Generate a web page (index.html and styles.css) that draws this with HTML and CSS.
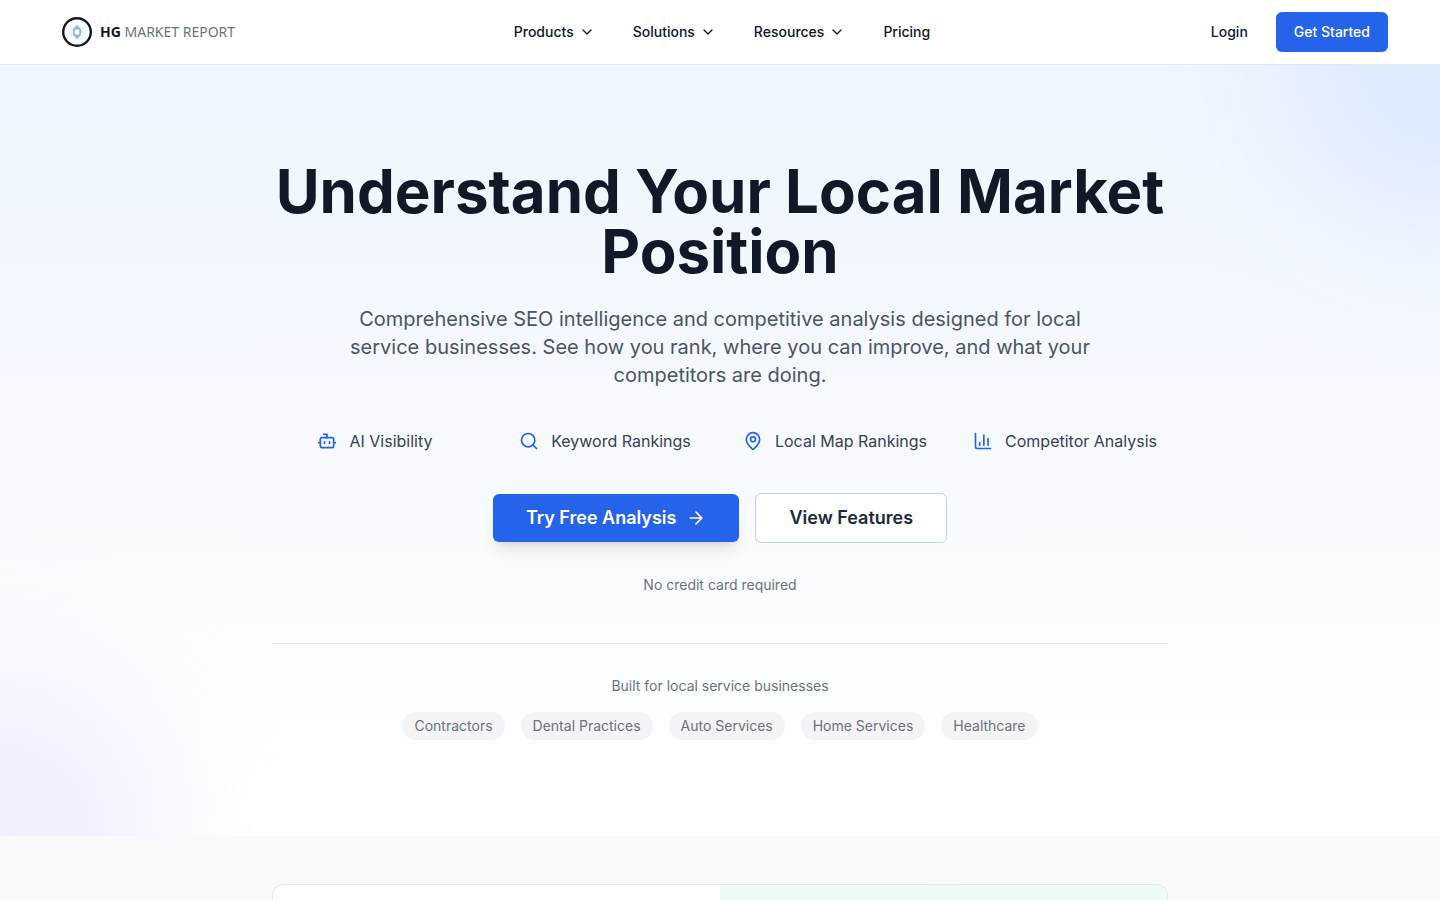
FILE: index.html
```html
<!DOCTYPE html>
<html lang="en">
<head>
<meta charset="utf-8">
<meta name="viewport" content="width=device-width, initial-scale=1">
<title>HG Market Report</title>
<link rel="stylesheet" href="styles.css">
</head>
<body>
<header class="site-header">
  <div class="header-inner">
    <a class="logo" href="#">
      <svg class="logo-mark" viewBox="0 0 30 30" aria-hidden="true">
        <circle cx="15" cy="15" r="13.8" fill="#fff" stroke="#0f172a" stroke-width="2.4"/>
        <circle cx="15" cy="15" r="6" fill="none" stroke="#d6e8f8" stroke-width="1.2" stroke-dasharray="2 1"/>
        <path d="M15 7.4l2.2 3 2 1.8v5.6l-2 1.8-2.2 3-2.2-3-2-1.8v-5.6l2-1.8z" fill="#84b9e6"/>
        <rect x="12.6" y="12.4" width="4.8" height="5.2" rx="1.4" fill="#fff"/>
      </svg>
      <span class="logo-text"><strong>HG</strong> MARKET REPORT</span>
    </a>
    <nav class="main-nav" aria-label="Main">
      <button class="nav-item" type="button">Products <svg class="icon chevron" viewBox="0 0 24 24" aria-hidden="true"><path d="m6 9 6 6 6-6"/></svg></button>
      <button class="nav-item" type="button">Solutions <svg class="icon chevron" viewBox="0 0 24 24" aria-hidden="true"><path d="m6 9 6 6 6-6"/></svg></button>
      <button class="nav-item" type="button">Resources <svg class="icon chevron" viewBox="0 0 24 24" aria-hidden="true"><path d="m6 9 6 6 6-6"/></svg></button>
      <a class="nav-item" href="#">Pricing</a>
    </nav>
    <div class="header-actions">
      <a class="login" href="#">Login</a>
      <a class="get-started" href="#">Get Started</a>
    </div>
  </div>
</header>
<main>
  <section class="hero">
    <div class="blob blob-top"></div>
    <div class="blob blob-bottom"></div>
    <div class="hero-inner">
      <h1>Understand Your Local Market Position</h1>
      <p class="lead">Comprehensive SEO intelligence and competitive analysis designed for local service businesses. See how you rank, where you can improve, and what your competitors are doing.</p>
      <ul class="features">
        <li><svg class="icon" viewBox="0 0 24 24" aria-hidden="true"><path d="M12 8V4H8"/><rect width="16" height="12" x="4" y="8" rx="2"/><path d="M2 14h2M20 14h2M15 13v2M9 13v2"/></svg>AI Visibility</li>
        <li><svg class="icon" viewBox="0 0 24 24" aria-hidden="true"><circle cx="11" cy="11" r="8"/><path d="m21 21-4.3-4.3"/></svg>Keyword Rankings</li>
        <li><svg class="icon" viewBox="0 0 24 24" aria-hidden="true"><path d="M20 10c0 4.993-5.539 10.193-7.399 11.799a1 1 0 0 1-1.202 0C9.539 20.193 4 14.993 4 10a8 8 0 0 1 16 0"/><circle cx="12" cy="10" r="3"/></svg>Local Map Rankings</li>
        <li><svg class="icon" viewBox="0 0 24 24" aria-hidden="true"><path d="M3 3v16a2 2 0 0 0 2 2h16M18 17V9M13 17V5M8 17v-3"/></svg>Competitor Analysis</li>
      </ul>
      <div class="cta">
        <a class="button primary" href="#">Try Free Analysis <svg class="icon" viewBox="0 0 24 24" aria-hidden="true"><path d="M5 12h14M12 5l7 7-7 7"/></svg></a>
        <a class="button secondary" href="#">View Features</a>
      </div>
      <p class="note">No credit card required</p>
      <div class="audience">
        <p>Built for local service businesses</p>
        <ul class="tags">
          <li>Contractors</li>
          <li>Dental Practices</li>
          <li>Auto Services</li>
          <li>Home Services</li>
          <li>Healthcare</li>
        </ul>
      </div>
    </div>
  </section>
  <section class="showcase">
    <div class="showcase-card">
      <div class="showcase-copy"></div>
      <div class="showcase-visual"></div>
    </div>
  </section>
</main>
</body>
</html>
```
FILE: styles.css
```css
* { box-sizing: border-box; }
body {
  display: flex;
  flex-direction: column;
  min-height: 100vh;
  margin: 0;
  font-family: Inter, "Liberation Sans", sans-serif;
  font-size: 16px;
  line-height: 24px;
  color: #111827;
  background: #fff;
}
main { display: flex; flex-direction: column; flex: 1; }
h1, p, ul { margin: 0; padding: 0; }
ul { list-style: none; }
a { color: inherit; text-decoration: none; }
button { font: inherit; color: inherit; background: none; border: 0; padding: 0; }
.icon {
  width: 20px;
  height: 20px;
  flex: none;
  fill: none;
  stroke: currentColor;
  stroke-width: 2;
  stroke-linecap: round;
  stroke-linejoin: round;
}
.site-header { background: #fff; border-bottom: 1px solid #e5e7eb; }
.header-inner {
  display: flex;
  align-items: center;
  justify-content: space-between;
  max-width: 1400px;
  height: 64px;
  margin: 0 auto;
  padding: 0 32px;
  font-size: 14px;
  line-height: 20px;
  font-weight: 500;
  color: #0f172a;
}
.logo { display: flex; align-items: center; gap: 8px; padding: 0 10px; }
.logo-mark { width: 30px; height: 30px; }
.logo-text { font-family: "Noto Sans", sans-serif; font-weight: 400; color: #6b7280; }
.logo-text strong { font-weight: 700; color: #0f172a; }
.main-nav { display: flex; align-items: center; gap: 38px; }
.nav-item { display: flex; align-items: center; gap: 5px; }
.chevron { width: 16px; height: 16px; }
.header-actions { display: flex; align-items: center; gap: 16px; }
.login { padding: 10px 12px; }
.get-started { padding: 10px 18px; border-radius: 6px; background: #2563eb; color: #fff; }

.hero {
  position: relative;
  overflow: hidden;
  padding: 96px 32px;
  background: linear-gradient(to bottom, #eff6ff, #f7faff 50%, #fafeff 75%, #fff);
}
.blob { position: absolute; width: 320px; height: 320px; border-radius: 50%; filter: blur(64px); }
.blob-top { top: -160px; right: -160px; background: #dbe9ff; opacity: 0.9; }
.blob-bottom { bottom: -160px; left: -160px; background: #ebebfe; opacity: 0.8; }
.hero-inner { position: relative; max-width: 896px; margin: 0 auto; text-align: center; }
h1 { font-size: 60px; line-height: 60px; font-weight: 700; }
.lead { max-width: 768px; margin: 24px auto 40px; font-size: 20px; line-height: 28px; color: #4b5563; }
.features { display: grid; grid-template-columns: repeat(4, 1fr); gap: 24px; color: #374151; }
.features li { display: flex; align-items: center; justify-content: center; gap: 12px; white-space: nowrap; }
.features .icon { color: #2563eb; }
.cta { display: flex; align-items: center; justify-content: center; gap: 16px; margin-top: 40px; }
.button {
  display: flex;
  align-items: center;
  gap: 10px;
  padding: 10px 33px;
  border-radius: 6px;
  font-size: 18px;
  line-height: 28px;
  font-weight: 600;
}
.primary { background: #2563eb; color: #fff; box-shadow: 0 10px 15px -3px rgb(0 0 0 / 0.1), 0 4px 6px -4px rgb(0 0 0 / 0.1); }
.secondary { border: 1px solid #c3d3e2; background: #fcfeff; color: #1f2937; }
.note { margin-top: 32px; font-size: 14px; line-height: 20px; color: #6b7280; }
.audience { margin-top: 48px; padding-top: 32px; border-top: 1px solid #e5e7eb; font-size: 14px; line-height: 20px; color: #6b7280; }
.tags { display: flex; flex-wrap: wrap; justify-content: center; gap: 16px; margin-top: 16px; }
.tags li { padding: 4px 12px; border-radius: 14px; background: #f3f4f6; }

.showcase { display: flex; flex: 1; padding: 48px 32px 0; background: #f9fafb; }
.showcase-card {
  display: grid;
  grid-template-columns: 1fr 1fr;
  width: 100%;
  max-width: 896px;
  margin: 0 auto;
  overflow: hidden;
  border: 1px solid #e5e7eb;
  border-bottom: 0;
  border-radius: 12px 12px 0 0;
  background: #fff;
}
.showcase-visual { background: linear-gradient(to right, #eefbf7, #effafb); }
```
